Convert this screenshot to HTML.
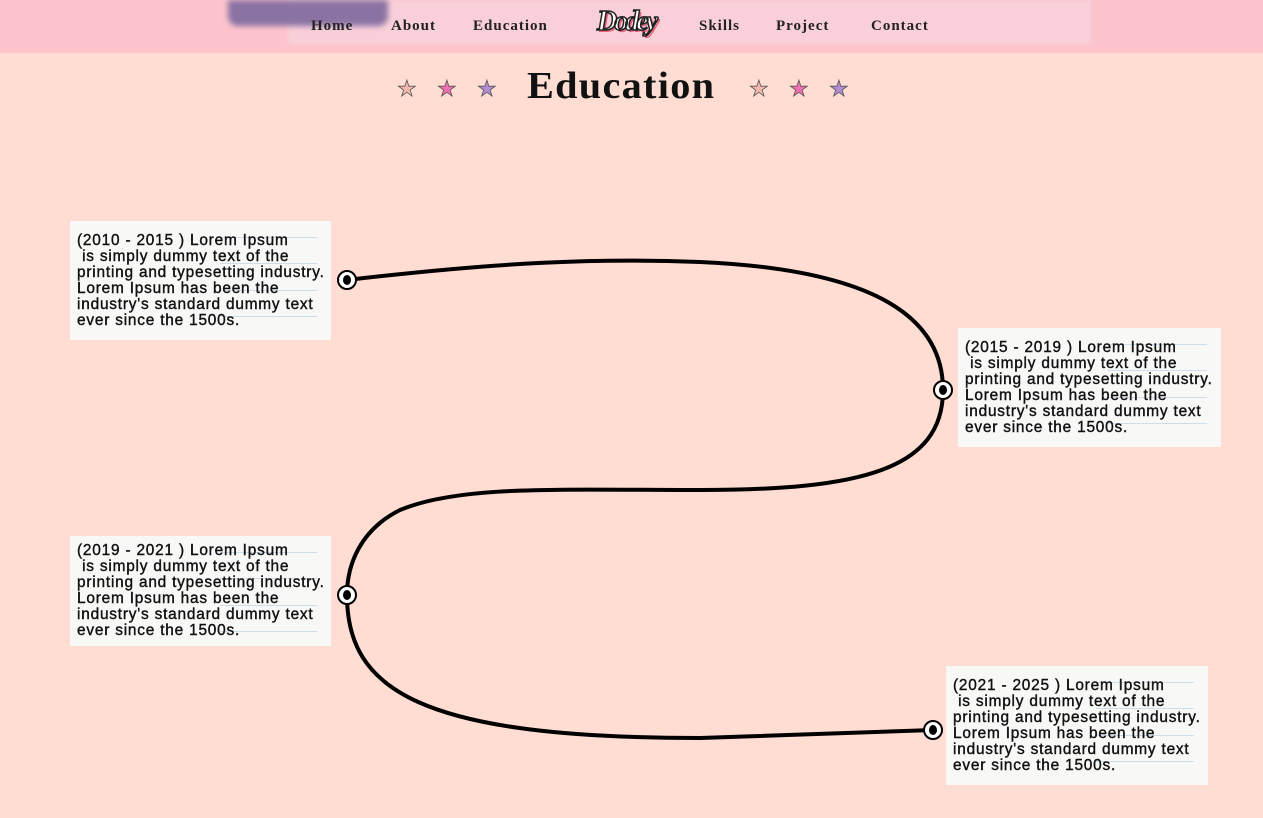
<!DOCTYPE html>
<html><head><meta charset="utf-8"><style>
*{margin:0;padding:0;box-sizing:border-box}
body{width:1263px;height:818px;background:#ffddd3;position:relative;overflow:hidden;font-family:"Liberation Sans",sans-serif}
.hdr{position:absolute;left:0;top:0;width:1263px;height:53px;background:#fdc4cc}
.panel{position:absolute;left:288px;top:0;width:803px;height:44px;background:#f9d0da;filter:blur(2px)}
.fig{position:absolute;left:228px;top:0;width:160px;height:26px;background:#8a72a3;filter:blur(3px);border-radius:0 0 10px 10px}
.nav{position:absolute;top:18px;font-size:15px;color:#222;letter-spacing:1px;font-family:"Liberation Serif",serif;font-weight:bold}
.logo{position:absolute;left:597px;top:6px;font:italic bold 28px "Liberation Serif",serif;color:#fff;-webkit-text-stroke:1.5px #222;text-shadow:2px 2px 0 #e8607c;letter-spacing:-3px}
h1{position:absolute;left:527px;top:64px;font:bold 38px "Liberation Serif",serif;color:#111;letter-spacing:1.2px;transform:scaleX(1.06);transform-origin:left}
.star{position:absolute;top:76px;font-size:22px;-webkit-text-stroke:0.8px #555}
.box{position:absolute;background:#f8f8f7;padding:12px 4px 0 7px;font-size:15.4px;line-height:16px;color:#111;white-space:pre;font-family:"Liberation Sans",sans-serif;letter-spacing:0.8px;-webkit-text-stroke:0.4px #111}
.box span{position:relative}
.box i{position:absolute;height:1px;background:#cfdceb;left:150px;right:14px}
</style></head><body>
<div class="hdr"></div>
<div class="panel"></div>
<div class="fig"></div>
<div class="nav" style="left:311px">Home</div>
<div class="nav" style="left:391px">About</div>
<div class="nav" style="left:473px">Education</div>
<div class="logo">Dodey</div>
<div class="nav" style="left:699px">Skills</div>
<div class="nav" style="left:776px">Project</div>
<div class="nav" style="left:871px">Contact</div>
<h1>Education</h1>
<div class="star" style="left:397px;color:#f6b8ac">★</div>
<div class="star" style="left:437px;color:#f26fb0">★</div>
<div class="star" style="left:477px;color:#b58ad0">★</div>
<div class="star" style="left:749px;color:#f6b8ac">★</div>
<div class="star" style="left:789px;color:#f26fb0">★</div>
<div class="star" style="left:829px;color:#b58ad0">★</div>
<svg width="1263" height="818" style="position:absolute;left:0;top:0">
<path d="M347,280 C500,262 600,258 700,262 C880,270 943,320 943,390 C943,470 860,490 700,490 C560,490 460,485 400,510 C360,530 347,565 347,595 C347,690 420,738 700,738 L933,730" fill="none" stroke="#000" stroke-width="4"/>
<g fill="#fff" stroke="#000" stroke-width="2">
<circle cx="347" cy="280" r="9"/><circle cx="943" cy="390" r="9"/><circle cx="347" cy="595" r="9"/><circle cx="933" cy="730" r="9"/></g>
<g fill="#000"><ellipse cx="347" cy="280" rx="4" ry="5"/><ellipse cx="943" cy="390" rx="4" ry="5"/><ellipse cx="347" cy="595" rx="4" ry="5"/><ellipse cx="933" cy="730" rx="4" ry="5"/></g>
</svg>
<div class="box" style="left:70px;top:221px;width:261px;height:119px"><i style="top:16px"></i><i style="top:42px"></i><i style="top:69px"></i><i style="top:95px"></i><span>(2010 - 2015 ) Lorem Ipsum
 is simply dummy text of the
printing and typesetting industry.
Lorem Ipsum has been the
industry's standard dummy text
ever since the 1500s.</span></div>
<div class="box" style="left:958px;top:328px;width:263px;height:119px"><i style="top:16px"></i><i style="top:42px"></i><i style="top:69px"></i><i style="top:95px"></i><span>(2015 - 2019 ) Lorem Ipsum
 is simply dummy text of the
printing and typesetting industry.
Lorem Ipsum has been the
industry's standard dummy text
ever since the 1500s.</span></div>
<div class="box" style="left:70px;top:536px;width:261px;height:110px;padding-top:7px"><i style="top:16px"></i><i style="top:42px"></i><i style="top:69px"></i><i style="top:95px"></i><span>(2019 - 2021 ) Lorem Ipsum
 is simply dummy text of the
printing and typesetting industry.
Lorem Ipsum has been the
industry's standard dummy text
ever since the 1500s.</span></div>
<div class="box" style="left:946px;top:666px;width:262px;height:119px"><i style="top:16px"></i><i style="top:42px"></i><i style="top:69px"></i><i style="top:95px"></i><span>(2021 - 2025 ) Lorem Ipsum
 is simply dummy text of the
printing and typesetting industry.
Lorem Ipsum has been the
industry's standard dummy text
ever since the 1500s.</span></div>
</body></html>
